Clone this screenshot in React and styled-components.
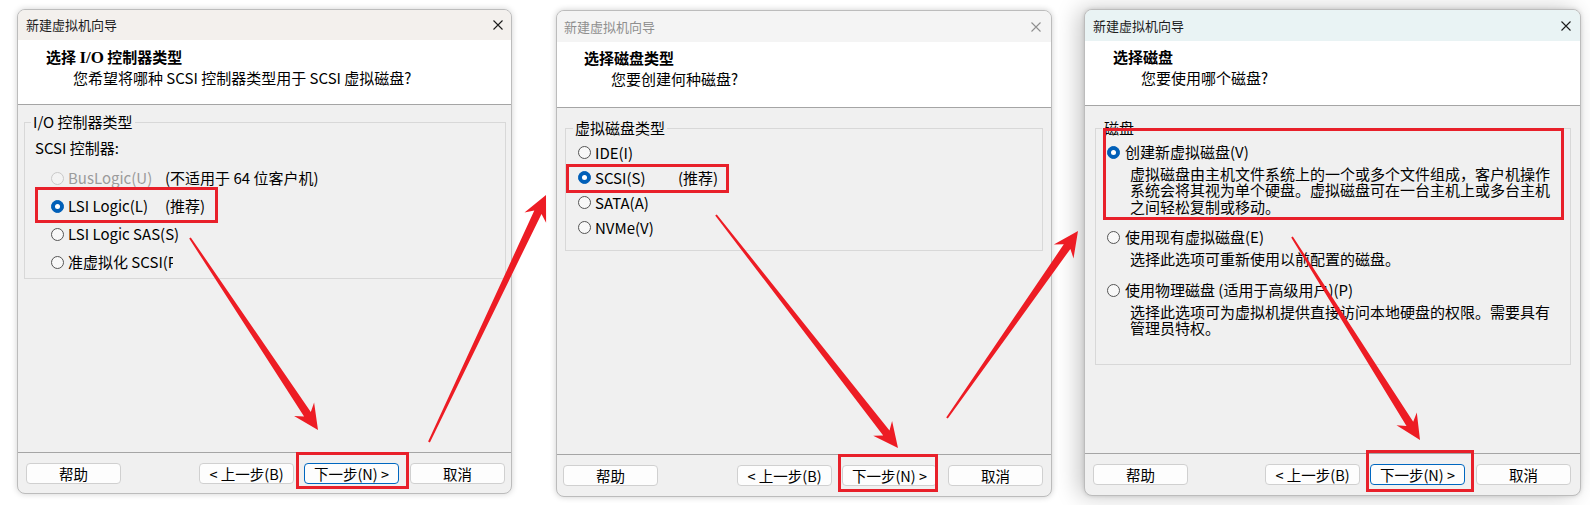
import React from "react";
import styled, { createGlobalStyle } from "styled-components";

const FONT = `"Noto Sans CJK SC", "Noto Sans", sans-serif`;

const GlobalStyle = createGlobalStyle`
  html, body { margin: 0; padding: 0; background: #ffffff; }
  body { font-family: ${FONT}; color: #000; }
  * { box-sizing: border-box; }
`;

const Stage = styled.main`
  position: relative;
  width: 1590px;
  height: 505px;
  overflow: hidden;
  background: #ffffff;
  display: flex;
  align-items: flex-start;
`;

const Win = styled.section`
  flex: none;
  display: flex;
  flex-direction: column;
  width: ${(p) => p.$w}px;
  height: ${(p) => p.$h}px;
  margin: ${(p) => p.$mt}px 0 0 ${(p) => p.$ml}px;
  background: #f0f0f0;
  border: 1px solid #bcbcbc;
  border-radius: 8px;
  overflow: hidden;
  box-shadow: ${(p) => p.$shadow};
`;

const TitleBar = styled.div`
  flex: none;
  height: ${(p) => p.$h}px;
  display: flex;
  align-items: center;
  justify-content: space-between;
  padding: 0 ${(p) => p.$pr}px 0 ${(p) => p.$pl}px;
  background: ${(p) => p.$bg};
  color: ${(p) => (p.$inactive ? "#8f8f8f" : "#1c1c1c")};
  font-size: 13px;
  line-height: 16px;
`;

const Header = styled.header`
  flex: none;
  height: ${(p) => p.$h}px;
  padding: ${(p) => p.$pt}px 0 0 ${(p) => p.$pl}px;
  background: #ffffff;
  border-bottom: 1px solid #a5a5a5;
`;

const HeadTitle = styled.h1`
  margin: 0;
  font-size: 15px;
  line-height: 20px;
  font-weight: 700;
  color: #000;
  white-space: nowrap;
`;

const SerifBold = styled.span`
  font-family: "Liberation Serif", serif;
  font-weight: 700;
  font-size: 17px;
`;

const HeadSub = styled.p`
  margin: ${(p) => p.$gap}px 0 0 ${(p) => p.$indent}px;
  font-size: 15px;
  line-height: 20px;
  color: #000;
  white-space: nowrap;
`;

const Body = styled.div`
  flex: 1;
  min-height: 0;
  padding-top: ${(p) => p.$pt}px;
`;

const Group = styled.div`
  position: relative;
  height: ${(p) => p.$h}px;
  margin: 0 ${(p) => p.$mr}px 0 ${(p) => p.$ml}px;
  padding-top: ${(p) => p.$pt}px;
  border: 1px solid #d8d8d8;
`;

const Legend = styled.span`
  position: absolute;
  left: ${(p) => p.$left}px;
  top: -11px;
  padding: 0 2px;
  background: #f0f0f0;
  font-size: 15px;
  line-height: 20px;
  white-space: nowrap;
  color: #000;
`;

const Caption = styled.div`
  padding-left: ${(p) => p.$pl}px;
  margin-bottom: ${(p) => p.$mb}px;
  font-size: 15px;
  line-height: 20px;
`;

const OptionRow = styled.div`
  display: flex;
  align-items: center;
  gap: ${(p) => p.$gap}px;
  height: ${(p) => p.$h}px;
  padding-left: ${(p) => p.$pl}px;
  font-size: 15px;
  line-height: 20px;
  white-space: nowrap;
  color: ${(p) => (p.$disabled ? "#9b9b9b" : "#000")};
`;

const OptLabel = styled.span`
  flex: none;
  width: ${(p) => (p.$w ? `${p.$w}px` : "auto")};
  overflow: hidden;
`;

const Note = styled.span`
  color: #000;
`;

const Radio = styled.span`
  flex: none;
  width: 13px;
  height: 13px;
  border-radius: 50%;
  display: flex;
  align-items: center;
  justify-content: center;
  border: 1px solid
    ${(p) => (p.$disabled ? "#c9c9c9" : p.$checked ? "#005fb8" : "#555555")};
  background: ${(p) => (p.$checked ? "#005fb8" : p.$disabled ? "#f3f3f3" : "#f8f8f8")};
  &::after {
    content: "";
    display: ${(p) => (p.$checked ? "block" : "none")};
    width: 5px;
    height: 5px;
    border-radius: 50%;
    background: #ffffff;
  }
`;

const Choice = styled.div`
  margin-top: ${(p) => p.$mt}px;
`;

const Desc = styled.div`
  margin: ${(p) => p.$mt}px 0 0 ${(p) => p.$indent}px;
  font-size: 15px;
  line-height: 16.5px;
  color: #000;
`;

const DescLine = styled.div`
  white-space: nowrap;
`;

const Footer = styled.footer`
  flex: none;
  display: flex;
  align-items: flex-start;
  height: ${(p) => p.$h}px;
  padding: 10px ${(p) => p.$pr}px 0 ${(p) => p.$pl}px;
  border-top: 1px solid #a5a5a5;
`;

const Btn = styled.button`
  flex: none;
  width: 95px;
  height: 21px;
  margin: 0 0 0 ${(p) => p.$ml || "0"};
  padding: 0;
  font-family: ${FONT};
  font-size: 14.5px;
  line-height: 19px;
  color: #000;
  background: #fdfdfd;
  border: 1px solid ${(p) => (p.$primary ? "#0067c0" : "#d0d0d0")};
  border-radius: 4px;
  white-space: nowrap;
`;

const Overlay = styled.svg`
  position: absolute;
  left: 0;
  top: 0;
  pointer-events: none;
`;

const CloseIcon = ({ color }) => (
  <svg width="10" height="10" viewBox="0 0 10 10">
    <path d="M0.5 0.5L9.5 9.5M9.5 0.5L0.5 9.5" stroke={color} strokeWidth="1.1" fill="none" />
  </svg>
);

function arrowPoints([x1, y1], [x2, y2]) {
  const tail = 1;
  const shaft = 4;
  const headLen = 25;
  const headHalf = 12;
  const notch = 6;
  const dx = x2 - x1;
  const dy = y2 - y1;
  const L = Math.hypot(dx, dy);
  const ux = dx / L;
  const uy = dy / L;
  const nx = -uy;
  const ny = ux;
  const at = (d, o) => [x1 + ux * d + nx * o, y1 + uy * d + ny * o];
  const pts = [
    at(0, tail),
    at(L - headLen + notch, shaft),
    at(L - headLen, headHalf),
    [x2, y2],
    at(L - headLen, -headHalf),
    at(L - headLen + notch, -shaft),
    at(0, -tail),
  ];
  return pts.map((p) => p.map((v) => v.toFixed(1)).join(",")).join(" ");
}

const ARROWS = [
  [[190, 238], [318, 430]],
  [[429, 442], [546, 195]],
  [[716, 215], [898, 448]],
  [[947, 418], [1078, 231]],
  [[1292, 237], [1420, 440]],
];

// outer edges of the red highlight boxes
const BOXES = [
  [35, 187, 218, 223],
  [296, 452, 409, 489],
  [566, 164, 729, 193],
  [838, 454, 938, 492],
  [1103, 128, 1564, 220],
  [1366, 450, 1474, 492],
];

function Annotations() {
  return (
    <Overlay width="1590" height="505" viewBox="0 0 1590 505">
      {BOXES.map(([x1, y1, x2, y2], i) => (
        <rect
          key={i}
          x={x1 + 1.5}
          y={y1 + 1.5}
          width={x2 - x1 - 3}
          height={y2 - y1 - 3}
          fill="none"
          stroke="#e8202a"
          strokeWidth="3"
        />
      ))}
      {ARROWS.map(([a, b], i) => (
        <polygon key={i} points={arrowPoints(a, b)} fill="#ed1c24" />
      ))}
    </Overlay>
  );
}

function WizardFooter({ h, pl, pr, primaryNext }) {
  return (
    <Footer $h={h} $pl={pl} $pr={pr}>
      <Btn>帮助</Btn>
      <Btn $ml="auto">&lt; 上一步(B)</Btn>
      <Btn $ml="10px" $primary={primaryNext}>下一步(N) &gt;</Btn>
      <Btn $ml="11px">取消</Btn>
    </Footer>
  );
}

function ControllerWindow() {
  const rows = [
    { label: "BusLogic(U)", note: "(不适用于 64 位客户机)", disabled: true },
    { label: "LSI Logic(L)", note: "(推荐)", checked: true },
    { label: "LSI Logic SAS(S)" },
    { label: "准虚拟化 SCSI(P)", clip: 105 },
  ];
  return (
    <Win $ml={17} $mt={9} $w={495} $h={485} $shadow="0 0 6px rgba(0,0,0,0.18)">
      <TitleBar $h={30} $bg="#f3f0ed" $pl={8} $pr={8}>
        <span>新建虚拟机向导</span>
        <CloseIcon color="#1c1c1c" />
      </TitleBar>
      <Header $h={65} $pt={7} $pl={28}>
        <HeadTitle>
          选择 <SerifBold>I/O</SerifBold> 控制器类型
        </HeadTitle>
        <HeadSub $gap={0} $indent={27}>
          您希望将哪种 SCSI 控制器类型用于 SCSI 虚拟磁盘?
        </HeadSub>
      </Header>
      <Body $pt={17}>
        <Group $h={157} $ml={6} $mr={5} $pt={15}>
          <Legend $left={6}>I/O 控制器类型</Legend>
          <Caption $pl={10} $mb={6}>SCSI 控制器:</Caption>
          {rows.map((r) => (
            <OptionRow key={r.label} $h={28} $pl={26} $gap={4} $disabled={r.disabled}>
              <Radio $checked={r.checked} $disabled={r.disabled} />
              <OptLabel $w={r.clip || (r.note ? 93 : 0)}>{r.label}</OptLabel>
              {r.note && <Note>{r.note}</Note>}
            </OptionRow>
          ))}
        </Group>
      </Body>
      <WizardFooter h={41} pl={8} pr={6} primaryNext />
    </Win>
  );
}

function DiskTypeWindow() {
  const rows = [
    { label: "IDE(I)" },
    { label: "SCSI(S)", note: "(推荐)", checked: true },
    { label: "SATA(A)" },
    { label: "NVMe(V)" },
  ];
  return (
    <Win $ml={44} $mt={10} $w={496} $h={487} $shadow="0 0 6px rgba(0,0,0,0.2)">
      <TitleBar $h={31} $bg="#f4f4f4" $pl={7} $pr={10} $inactive>
        <span>新建虚拟机向导</span>
        <CloseIcon color="#8f8f8f" />
      </TitleBar>
      <Header $h={66} $pt={6} $pl={27}>
        <HeadTitle>选择磁盘类型</HeadTitle>
        <HeadSub $gap={1} $indent={27}>您要创建何种磁盘?</HeadSub>
      </Header>
      <Body $pt={20}>
        <Group $h={123} $ml={8} $mr={8} $pt={11}>
          <Legend $left={7}>虚拟磁盘类型</Legend>
          {rows.map((r) => (
            <OptionRow key={r.label} $h={25} $pl={12} $gap={4}>
              <Radio $checked={r.checked} />
              <OptLabel $w={r.note ? 79 : 0}>{r.label}</OptLabel>
              {r.note && <Note>{r.note}</Note>}
            </OptionRow>
          ))}
        </Group>
      </Body>
      <WizardFooter h={42} pl={6} pr={8} />
    </Win>
  );
}

function DiskWindow() {
  const choices = [
    {
      label: "创建新虚拟磁盘(V)",
      checked: true,
      mt: 0,
      lines: [
        "虚拟磁盘由主机文件系统上的一个或多个文件组成，客户机操作",
        "系统会将其视为单个硬盘。虚拟磁盘可在一台主机上或多台主机",
        "之间轻松复制或移动。",
      ],
    },
    {
      label: "使用现有虚拟磁盘(E)",
      mt: 12,
      lines: ["选择此选项可重新使用以前配置的磁盘。"],
    },
    {
      label: "使用物理磁盘 (适用于高级用户)(P)",
      mt: 13,
      lines: ["选择此选项可为虚拟机提供直接访问本地硬盘的权限。需要具有", "管理员特权。"],
    },
  ];
  return (
    <Win
      $ml={32}
      $mt={9}
      $w={497}
      $h={487}
      $shadow="-6px 0 22px rgba(0,0,0,0.22), 0 0 4px rgba(0,0,0,0.15)"
    >
      <TitleBar $h={31} $bg="#e9f3f4" $pl={8} $pr={9}>
        <span>新建虚拟机向导</span>
        <CloseIcon color="#1c1c1c" />
      </TitleBar>
      <Header $h={65} $pt={6} $pl={28}>
        <HeadTitle>选择磁盘</HeadTitle>
        <HeadSub $gap={1} $indent={28}>您要使用哪个磁盘?</HeadSub>
      </Header>
      <Body $pt={22}>
        <Group $h={237} $ml={10} $mr={9} $pt={13}>
          <Legend $left={6}>磁盘</Legend>
          {choices.map((c) => (
            <Choice key={c.label} $mt={c.mt}>
              <OptionRow $h={20} $pl={11} $gap={5}>
                <Radio $checked={c.checked} />
                <OptLabel>{c.label}</OptLabel>
              </OptionRow>
              <Desc $mt={3.5} $indent={34}>
                {c.lines.map((l) => (
                  <DescLine key={l}>{l}</DescLine>
                ))}
              </Desc>
            </Choice>
          ))}
        </Group>
      </Body>
      <WizardFooter h={42} pl={8} pr={9} primaryNext />
    </Win>
  );
}

export default function App() {
  return (
    <>
      <GlobalStyle />
      <Stage>
        <ControllerWindow />
        <DiskTypeWindow />
        <DiskWindow />
        <Annotations />
      </Stage>
    </>
  );
}
